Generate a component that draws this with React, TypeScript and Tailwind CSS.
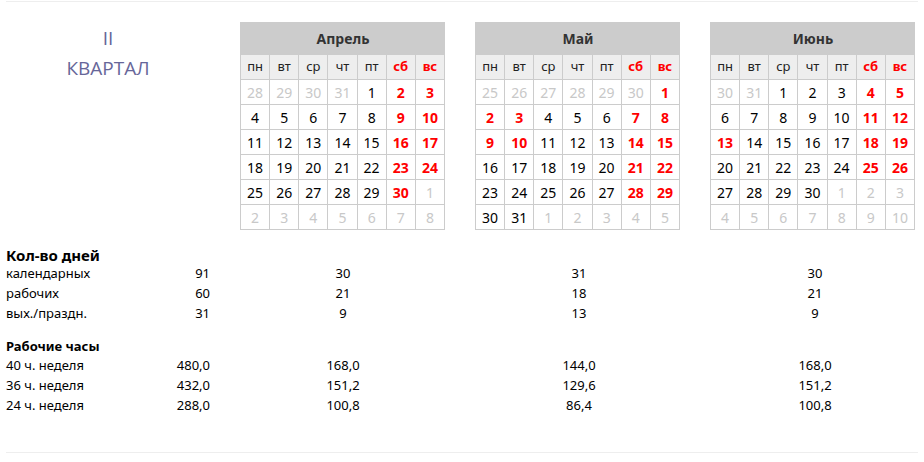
import React from 'react';

type Day = { d: number; t?: 'r' | 'g' };

const WEEK = ['пн', 'вт', 'ср', 'чт', 'пт', 'сб', 'вс'];

// g = other month, r = weekend / holiday
const mk = (s: string): Day[] =>
  s.split(' ').map((x) => {
    if (x.endsWith('r')) return { d: parseInt(x), t: 'r' };
    if (x.endsWith('g')) return { d: parseInt(x), t: 'g' };
    return { d: parseInt(x) };
  });

const months = [
  {
    name: 'Апрель',
    days: mk(
      '28g 29g 30g 31g 1 2r 3r 4 5 6 7 8 9r 10r 11 12 13 14 15 16r 17r 18 19 20 21 22 23r 24r 25 26 27 28 29 30r 1g 2g 3g 4g 5g 6g 7g 8g'
    ),
  },
  {
    name: 'Май',
    days: mk(
      '25g 26g 27g 28g 29g 30g 1r 2r 3r 4 5 6 7r 8r 9r 10r 11 12 13 14r 15r 16 17 18 19 20 21r 22r 23 24 25 26 27 28r 29r 30 31 1g 2g 3g 4g 5g'
    ),
  },
  {
    name: 'Июнь',
    days: mk(
      '30g 31g 1 2 3 4r 5r 6 7 8 9 10 11r 12r 13r 14 15 16 17 18r 19r 20 21 22 23 24 25r 26r 27 28 29 30 1g 2g 3g 4g 5g 6g 7g 8g 9g 10g'
    ),
  },
];

const Month = ({ name, days }: { name: string; days: Day[] }) => (
  <div className="w-[205px] border-l border-[#ccc]">
    <div className="h-[33px] bg-[#ccc] flex items-center justify-center text-[14px] font-bold text-[#333]">
      {name}
    </div>
    <div className="grid grid-cols-7">
      {WEEK.map((w, i) => (
        <div
          key={w}
          className={`h-[25px] bg-[#eee] border-r border-b border-[#ccc] flex items-center justify-center text-[13px] ${
            i > 4 ? 'text-[#f00] font-bold' : 'text-[#222]'
          }`}
        >
          {w}
        </div>
      ))}
      {days.map((x, i) => (
        <div
          key={i}
          className={`h-[25px] border-r border-b border-[#ccc] flex items-center justify-center text-[14px] ${
            x.t === 'r' ? 'text-[#f00] font-bold' : x.t === 'g' ? 'text-[#c8c8c8]' : 'text-black'
          }`}
        >
          {x.d}
        </div>
      ))}
    </div>
  </div>
);

const Row = ({ label, q, vals }: { label: string; q: string; vals: string[] }) => (
  <div className="flex h-[20px] items-center text-[13px] text-black">
    <div className="w-[150px]">{label}</div>
    <div className="w-[54px] text-right">{q}</div>
    <div className="w-[30px]" />
    <div className="flex gap-[30px]">
      {vals.map((v, i) => (
        <div key={i} className="w-[206px] text-center">
          {v}
        </div>
      ))}
    </div>
  </div>
);

export default function App() {
  return (
    <div
      className="w-[924px] h-[462px] bg-white px-[6px] pt-[1px]"
      style={{ fontFamily: '"Noto Sans", "Open Sans", sans-serif' }}
    >
      <div className="border-t border-[#eee]" />
      <div className="flex pt-[20px]">
        <div className="w-[234px]">
          <div
            className="w-[204px] text-center text-[19px] leading-[30px] text-[#666699] pt-[1px]"
            style={{ fontFamily: '"Open Sans", "Noto Sans", sans-serif' }}
          >
            <div>II</div>
            <div>КВАРТАЛ</div>
          </div>
        </div>
        <div className="flex gap-[30px]">
          {months.map((m) => (
            <Month key={m.name} name={m.name} days={m.days} />
          ))}
        </div>
      </div>

      <div className="mt-[17px]">
        <div className="h-[17px] flex items-center text-[15px] font-bold text-black">Кол-во дней</div>
        <Row label="календарных" q="91" vals={['30', '31', '30']} />
        <Row label="рабочих" q="60" vals={['21', '18', '21']} />
        <Row label="вых./праздн." q="31" vals={['9', '13', '9']} />

        <div className="mt-[14px] h-[18px] flex items-center text-[13px] font-bold text-black">Рабочие часы</div>
        <Row label="40 ч. неделя" q="480,0" vals={['168,0', '144,0', '168,0']} />
        <Row label="36 ч. неделя" q="432,0" vals={['151,2', '129,6', '151,2']} />
        <Row label="24 ч. неделя" q="288,0" vals={['100,8', '86,4', '100,8']} />
      </div>

      <div className="mt-[36px] border-t border-[#eee]" />
    </div>
  );
}
